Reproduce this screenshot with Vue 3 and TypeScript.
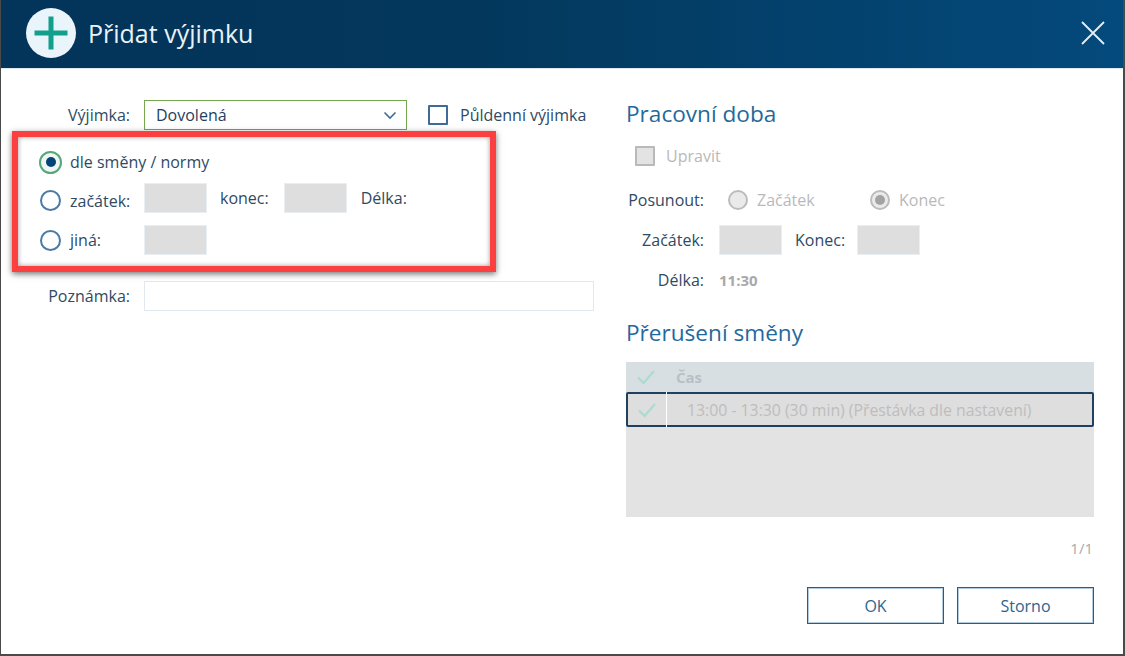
<script setup lang="ts">
const breakRow = '13:00 - 13:30 (30 min) (Přestávka dle nastavení)'
</script>

<template>
  <div class="dialog">
    <header class="head">
      <div class="head-left">
        <svg class="plus" width="50" height="50" viewBox="0 0 50 50">
          <circle cx="25" cy="25" r="25" fill="#e9f4fb" />
          <path d="M25 8.5v33M8.5 25h33" stroke="#12a08c" stroke-width="5" fill="none" />
        </svg>
        <h1>Přidat výjimku</h1>
      </div>
      <svg class="close" width="26" height="26" viewBox="0 0 26 26">
        <path d="M2 2l22 22M24 2L2 24" stroke="#e6eef4" stroke-width="1.8" fill="none" />
      </svg>
    </header>

    <main class="body">
      <section class="left">
        <div class="row r1">
          <label class="lab">Výjimka:</label>
          <div class="select">
            <span>Dovolená</span>
            <svg width="14" height="9" viewBox="0 0 14 9">
              <path d="M1.5 1.5L7 7l5.5-5.5" stroke="#3d6d96" stroke-width="1.6" fill="none" />
            </svg>
          </div>
          <span class="check half"></span>
          <span class="txt">Půldenní výjimka</span>
        </div>

        <div class="row radio-row r2">
          <span class="radio on"><i></i></span>
          <span class="txt">dle směny / normy</span>
        </div>
        <div class="row radio-row r3">
          <span class="radio low"></span>
          <span class="txt w-start low">začátek:</span>
          <span class="box"></span>
          <span class="txt konec">konec:</span>
          <span class="box"></span>
          <span class="txt delka">Délka:</span>
        </div>
        <div class="row radio-row r4">
          <span class="radio"></span>
          <span class="txt w-start">jiná:</span>
          <span class="box"></span>
        </div>

        <div class="row r5">
          <label class="lab">Poznámka:</label>
          <div class="note"></div>
        </div>

        <div class="marker"></div>
      </section>

      <section class="right">
        <h2>Pracovní doba</h2>
        <div class="upravit">
          <span class="check dis"></span>
          <span class="mut">Upravit</span>
        </div>
        <div class="rrow posun">
          <label class="rlab">Posunout:</label>
          <span class="radio dis"></span>
          <span class="mut opt">Začátek</span>
          <span class="radio dis on2"><i></i></span>
          <span class="mut">Konec</span>
        </div>
        <div class="rrow times">
          <label class="rlab">Začátek:</label>
          <span class="box"></span>
          <span class="txt r-konec">Konec:</span>
          <span class="box"></span>
        </div>
        <div class="rrow length">
          <label class="rlab">Délka:</label>
          <b>11:30</b>
        </div>

        <h2 class="h-break">Přerušení směny</h2>
        <div class="table">
          <div class="thead">
            <span class="tick">
              <svg width="20" height="16" viewBox="0 0 20 16"><path d="M2 8.5l5.5 5.5L18 2" stroke="#aedbd0" stroke-width="2.4" fill="none" /></svg>
            </span>
            <span class="th">Čas</span>
          </div>
          <div class="trow">
            <span class="tick">
              <svg width="20" height="16" viewBox="0 0 20 16"><path d="M2 8.5l5.5 5.5L18 2" stroke="#aedbd0" stroke-width="2.4" fill="none" /></svg>
            </span>
            <span class="td">{{ breakRow }}</span>
          </div>
        </div>
        <div class="pager">1/1</div>
        <div class="buttons">
          <button type="button">OK</button>
          <button type="button">Storno</button>
        </div>
      </section>
    </main>
  </div>
</template>

<style>
html, body { margin: 0; background: #fff; }
</style>

<style scoped>
* { box-sizing: border-box; }
.dialog {
  width: 1125px;
  height: 656px;
  display: flex;
  flex-direction: column;
  border-left: 1px solid #4a4a4a;
  border-right: 2px solid #4a4a4a;
  border-bottom: 2px solid #4a4a4a;
  background: #fff;
  font-family: "Open Sans", "Noto Sans", sans-serif;
  font-size: 16px;
  color: #2f4a63;
  overflow: hidden;
}
.head {
  height: 69px;
  flex: none;
  display: flex;
  align-items: center;
  justify-content: space-between;
  padding: 0 17px 2px 25px;
  background: linear-gradient(90deg, #03345a 0%, #03375b 40%, #044a7c 100%);
  border-bottom: 1px solid #dfe8ee;
}
.head-left { display: flex; align-items: center; gap: 12px; }
.plus { display: block; }
h1 {
  margin: 0;
  font-size: 25px;
  font-weight: 400;
  color: #eaf2f8;
}
.close { display: block; }
.body { flex: 1; display: flex; min-height: 0; }
.left { position: relative; width: 625px; flex: none; padding-top: 31px; }
.right { flex: 1; padding-top: 30px; }
.row { display: flex; align-items: center; }
.lab {
  width: 129px;
  text-align: right;
  margin-right: 14px;
  flex: none;
}
.r1 { height: 30px; }
.select {
  width: 263px;
  height: 30px;
  border: 1px solid #76a94f;
  display: flex;
  align-items: center;
  justify-content: space-between;
  padding: 0 9px 0 11px;
  color: #1f3f5c;
}
.check {
  width: 20px;
  height: 20px;
  border: 2px solid #3f6c96;
  flex: none;
  border-radius: 1px;
}
.half { margin: 0 12px 0 21px; }
.check.dis { background: #e3e3e3; border-color: #b9b9b9; }
.radio-row { padding-left: 38px; }
.r2 { margin-top: 17px; height: 30px; }
.r3 { margin-top: 6px; height: 30px; }
.r4 { margin-top: 12px; height: 30px; }
.r5 { margin-top: 26px; height: 30px; }
.radio {
  width: 21px;
  height: 21px;
  border-radius: 50%;
  border: 2px solid #4c7aa3;
  flex: none;
  display: flex;
  align-items: center;
  justify-content: center;
  margin: 0 9px 0 1px;
  background: #fff;
}
.radio i { width: 10px; height: 10px; border-radius: 50%; background: #03437a; display: block; }
.radio.on { width: 23px; height: 23px; margin: 0 8px 0 0; border-color: #55a67a; background: #eef7f2; }
.radio.dis { width: 20px; height: 20px; border-color: #bcbcbc; background: #eaeaea; margin: 0 9px 0 0; }
.radio.on2 i { background: #a3a3a3; }
.low { margin-top: 5px; }
.radio.low { margin-top: 5px; }
.w-start { width: 74px; flex: none; }
.box {
  width: 63px;
  height: 30px;
  background: #dedede;
  border: 1px solid #e9eef3;
  flex: none;
}
.konec { margin: 0 15px 0 13px; }
.delka { margin-left: 14px; }
.note {
  width: 450px;
  height: 30px;
  border: 1px solid #e2e8ef;
}
.marker {
  position: absolute;
  left: 11px;
  top: 62px;
  width: 484px;
  height: 141px;
  border: 6px solid #fc4040;
  box-shadow: 0 2px 6px rgba(0, 0, 0, 0.55), inset 0 0 5px rgba(0, 0, 0, 0.4);
  pointer-events: none;
}
h2 {
  margin: 0;
  height: 30px;
  line-height: 30px;
  font-size: 22.6px;
  font-weight: 400;
  color: #1f6a9c;
}
.upravit {
  display: flex;
  align-items: center;
  margin: 16px 0 0 9px;
  height: 22px;
}
.upravit .check { margin-right: 11px; }
.mut { color: #b9b9b9; }
.rrow { display: flex; align-items: center; }
.rlab { width: 78px; text-align: right; margin-right: 15px; flex: none; }
.posun { margin-top: 21px; height: 24px; }
.posun .rlab { margin-right: 24px; }
.opt { width: 113px; flex: none; }
.times { margin-top: 13px; height: 30px; }
.r-konec { margin: 0 12px 0 13px; }
.length { margin-top: 10px; height: 30px; }
.length b { color: #a9a9a9; font-weight: 700; font-size: 15px; }
.h-break { margin-top: 23px; }
.table {
  width: 468px;
  height: 155px;
  margin-top: 14px;
  background: #e3e3e3;
}
.thead { height: 30px; display: flex; align-items: center; background: #d8dfe3; }
.tick { width: 40px; flex: none; display: flex; justify-content: center; }
.th { color: #b9bfc4; font-weight: 700; font-size: 15px; margin-left: 10px; }
.trow {
  height: 35px;
  display: flex;
  align-items: center;
  background: #dedede;
  border: 2px solid #1f405e;
  border-radius: 2px;
  position: relative;
}
.trow .tick { width: 38px; }
.trow::after {
  content: "";
  position: absolute;
  left: 38px;
  top: -2px;
  bottom: -2px;
  width: 1px;
  background: #fff;
}
.td { color: #bdbdbd; margin-left: 21px; font-size: 15.8px; }
.pager {
  width: 468px;
  text-align: right;
  padding-right: 1px;
  margin-top: 21px;
  font-size: 15px;
  color: #aaaaaa;
}
.buttons {
  width: 468px;
  display: flex;
  justify-content: flex-end;
  gap: 13px;
  margin-top: 29px;
}
button {
  width: 137px;
  height: 37px;
  background: #fff;
  border: 1px solid #1f5f92;
  box-shadow: inset 0 0 0 1px #b3cbde;
  color: #2d6493;
  font-family: inherit;
  font-size: 16px;
  padding: 0;
}
</style>
